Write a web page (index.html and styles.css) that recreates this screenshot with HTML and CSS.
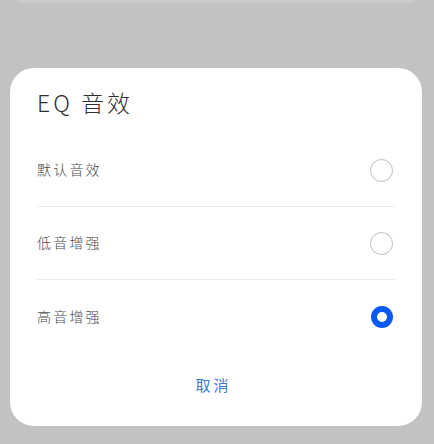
FILE: index.html
```html
<!DOCTYPE html>
<html lang="zh">
  <head>
    <meta charset="UTF-8" />
    <title>EQ 音效</title>
    <link rel="stylesheet" href="styles.css">
  </head>
  <body>
    <div id="wrap">
      <div class="peek"></div>
      <div class="dialog">
        <h2 class="title">EQ 音效</h2>
        <ul class="list">
          <li class="item">
            <span>默认音效</span>
            <i class="radio"></i>
          </li>
          <li class="item">
            <span>低音增强</span>
            <i class="radio"></i>
          </li>
          <li class="item">
            <span>高音增强</span>
            <i class="radio on"></i>
          </li>
        </ul>
        <div class="foot">
          <button class="btn-cancel">取消</button>
        </div>
      </div>
    </div>
  </body>
</html>
```

FILE: styles.css
```css
* {
  box-sizing: border-box;
}
html,
body,
ul,
li,
h2 {
  padding: 0;
  margin: 0;
  list-style: none;
}
body {
  background-color: #c1c2c4;
  font-family: "Noto Sans CJK SC", "Noto Sans", sans-serif;
}
#wrap {
  height: 444px;
  display: flex;
  flex-direction: column;
}
.peek {
  height: 3px;
  margin: 0 19px 0 17px;
  background: #c9cacc;
  border-radius: 0 0 8px 8px;
}
.dialog {
  margin: 65px 12px 0 10px;
  padding: 0 27px 10px;
  background: #fff;
  border-radius: 24px;
}
.title {
  height: 66px;
  display: flex;
  align-items: center;
  font-size: 23px;
  font-weight: 200;
  letter-spacing: 3px;
  color: #2f2f2f;
  padding-top: 2px;
}
.item {
  display: flex;
  justify-content: space-between;
  align-items: center;
  height: 73px;
  border-bottom: 1px solid #ececec;
  font-size: 14px;
  font-weight: 300;
  letter-spacing: 2.2px;
  color: #4a4a4a;
}
.item:last-child {
  height: 74px;
  border-bottom: 0;
}
.item span {
  margin-top: -2px;
}
.radio {
  width: 23px;
  height: 23px;
  margin-right: 2px;
  border: 1px solid #bdbdbd;
  border-radius: 50%;
}
.radio.on {
  width: 22px;
  height: 22px;
  border: 6px solid #0a59f7;
}
.foot {
  height: 62px;
  display: flex;
  justify-content: center;
  align-items: center;
}
.btn-cancel {
  border: 0;
  background: transparent;
  font-family: inherit;
  font-size: 15px;
  letter-spacing: 3px;
  color: #3b78d0;
  padding: 6px 0;
  margin: -2px 5px 0 0;
  cursor: pointer;
}
```
